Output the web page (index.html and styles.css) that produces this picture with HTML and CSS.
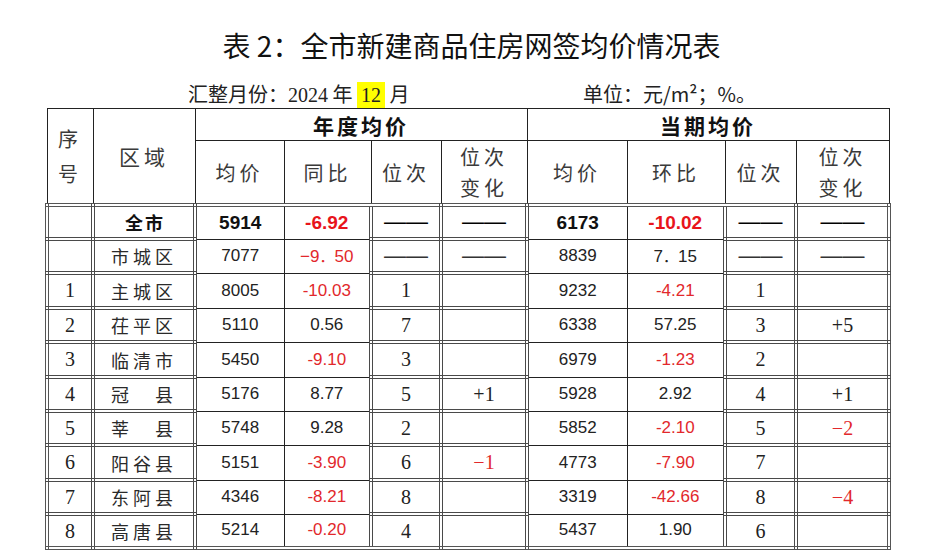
FILE: index.html
```html
<!DOCTYPE html>
<html lang="zh-CN">
<head>
<meta charset="utf-8">
<title>表 2：全市新建商品住房网签均价情况表</title>
<link rel="stylesheet" href="styles.css">
</head>
<body>
<div class="page">
  <h1 class="title">表 2：全市新建商品住房网签均价情况表</h1>
  <div class="meta">
    <span class="month">汇整月份：<span class="d">2024</span> 年 <mark class="hl d">12</mark> 月</span>
    <span class="unit">单位：元/m²；%。</span>
  </div>
  <table class="grid">
    <colgroup>
      <col class="c1"><col class="c2"><col class="c3"><col class="c4"><col class="c5">
      <col class="c6"><col class="c7"><col class="c8"><col class="c9"><col class="c10">
    </colgroup>
    <thead>
      <tr class="hrow1">
        <th rowspan="2" class="hd seq">序<br>号</th>
        <th rowspan="2" class="hd area">区域</th>
        <th colspan="4" class="grp">年度均价</th>
        <th colspan="4" class="grp">当期均价</th>
      </tr>
      <tr class="hrow2">
        <th class="hd">均价</th>
        <th class="hd">同比</th>
        <th class="hd">位次</th>
        <th class="hd two">位次<br>变化</th>
        <th class="hd">均价</th>
        <th class="hd">环比</th>
        <th class="hd">位次</th>
        <th class="hd two">位次<br>变化</th>
      </tr>
    </thead>
    <tbody>
      <tr class="first r34">
        <td class="box"></td>
        <td class="box name total">全市</td>
        <td class="num big">5914</td>
        <td class="num big red">-6.92</td>
        <td class="box dash strong">——</td>
        <td class="box dash strong">——</td>
        <td class="num big">6173</td>
        <td class="num big red">-10.02</td>
        <td class="box dash strong">——</td>
        <td class="box dash strong">——</td>
      </tr>
      <tr class="r34">
        <td class="box"></td>
        <td class="box name">市城区</td>
        <td class="num">7077</td>
        <td class="num red">−9<span class="fw">．</span>50</td>
        <td class="box dash">——</td>
        <td class="box dash">——</td>
        <td class="num">8839</td>
        <td class="num">7<span class="fw">．</span>15</td>
        <td class="box dash">——</td>
        <td class="box dash">——</td>
      </tr>
      <tr class="r35">
        <td class="box rank">1</td>
        <td class="box name">主城区</td>
        <td class="num">8005</td>
        <td class="num red">-10.03</td>
        <td class="box rank">1</td>
        <td class="box rank"></td>
        <td class="num">9232</td>
        <td class="num red">-4.21</td>
        <td class="box rank">1</td>
        <td class="box rank"></td>
      </tr>
      <tr class="r34">
        <td class="box rank">2</td>
        <td class="box name">茌平区</td>
        <td class="num">5110</td>
        <td class="num">0.56</td>
        <td class="box rank">7</td>
        <td class="box rank"></td>
        <td class="num">6338</td>
        <td class="num">57.25</td>
        <td class="box rank">3</td>
        <td class="box rank">+5</td>
      </tr>
      <tr class="r35">
        <td class="box rank">3</td>
        <td class="box name">临清市</td>
        <td class="num">5450</td>
        <td class="num red">-9.10</td>
        <td class="box rank">3</td>
        <td class="box rank"></td>
        <td class="num">6979</td>
        <td class="num red">-1.23</td>
        <td class="box rank">2</td>
        <td class="box rank"></td>
      </tr>
      <tr class="r34">
        <td class="box rank">4</td>
        <td class="box name">冠　县</td>
        <td class="num">5176</td>
        <td class="num">8.77</td>
        <td class="box rank">5</td>
        <td class="box rank">+1</td>
        <td class="num">5928</td>
        <td class="num">2.92</td>
        <td class="box rank">4</td>
        <td class="box rank">+1</td>
      </tr>
      <tr class="r34">
        <td class="box rank">5</td>
        <td class="box name">莘　县</td>
        <td class="num">5748</td>
        <td class="num">9.28</td>
        <td class="box rank">2</td>
        <td class="box rank"></td>
        <td class="num">5852</td>
        <td class="num red">-2.10</td>
        <td class="box rank">5</td>
        <td class="box rank red">−2</td>
      </tr>
      <tr class="r35">
        <td class="box rank">6</td>
        <td class="box name">阳谷县</td>
        <td class="num">5151</td>
        <td class="num red">-3.90</td>
        <td class="box rank">6</td>
        <td class="box rank red">−1</td>
        <td class="num">4773</td>
        <td class="num red">-7.90</td>
        <td class="box rank">7</td>
        <td class="box rank"></td>
      </tr>
      <tr class="r34">
        <td class="box rank">7</td>
        <td class="box name">东阿县</td>
        <td class="num">4346</td>
        <td class="num red">-8.21</td>
        <td class="box rank">8</td>
        <td class="box rank"></td>
        <td class="num">3319</td>
        <td class="num red">-42.66</td>
        <td class="box rank">8</td>
        <td class="box rank red">−4</td>
      </tr>
      <tr class="last r34">
        <td class="box rank">8</td>
        <td class="box name">高唐县</td>
        <td class="num">5214</td>
        <td class="num red">-0.20</td>
        <td class="box rank">4</td>
        <td class="box rank"></td>
        <td class="num">5437</td>
        <td class="num">1.90</td>
        <td class="box rank">6</td>
        <td class="box rank"></td>
      </tr>
    </tbody>
  </table>
</div>
</body>
</html>
```

FILE: styles.css
```css
html, body {
  margin: 0;
  padding: 0;
  background: #ffffff;
}

.page {
  width: 929px;
  height: 557px;
  overflow: hidden;
  font-family: "Noto Sans CJK SC", "Liberation Sans", sans-serif;
  color: #1a1a1a;
}

.title {
  margin: 0;
  padding: 27px 0 0 14px;
  height: 36px;
  line-height: 36px;
  font-size: 28px;
  font-weight: 400;
  text-align: center;
  color: #111;
}

.meta {
  display: flex;
  margin-top: 18px;
  padding-left: 188px;
  height: 26px;
  line-height: 26px;
  font-size: 20px;
  color: #222;
}

.month {
  width: 395px;
}

.d {
  font-family: "Liberation Serif", serif;
  font-size: 20px;
}

.hl {
  background: #ffff00;
  color: #222;
  padding: 0 4px;
  display: inline-block;
  line-height: 26px;
}

.grid {
  margin: 1px 0 0 45px;
  width: 842px;
  table-layout: fixed;
  border-collapse: collapse;
}

.c1 { width: 46px; }
.c2 { width: 102px; }
.c3 { width: 89px; }
.c4 { width: 87px; }
.c5 { width: 70px; }
.c6 { width: 86px; }
.c7 { width: 100px; }
.c8 { width: 98px; }
.c9 { width: 71px; }
.c10 { width: 93px; }

.grid th,
.grid td {
  padding: 0;
  text-align: center;
  vertical-align: middle;
  border: 1px solid #222;
}

.hrow1 { height: 32px; }
.hrow2 { height: 62px; }
.r34 { height: 34px; }
.r35 { height: 35px; }

.hd {
  font-size: 20px;
  font-weight: 400;
  color: #3a3a3a;
  letter-spacing: 4px;
  padding-left: 4px;
}

.seq {
  line-height: 35px;
}

.area {
  font-size: 21px;
}

.two {
  line-height: 31px;
}

.grp {
  font-size: 21px;
  font-weight: 700;
  letter-spacing: 3px;
  padding-left: 3px;
  color: #111;
}

.grid td.box {
  border: 4px double #4a4a4a;
}

.grid td.num {
  border: 1px solid #222;
  font-family: "Liberation Sans", Arial, sans-serif;
  font-size: 17px;
  color: #222;
}

.grid tr.first td {
  border-top: 4px double #555;
}

.grid tr.last td {
  border-bottom: 4px double #555;
}

.grid tr td:first-child {
  border-left: 4px double #555;
}

.grid tr td:last-child {
  border-right: 4px double #555;
}

.name {
  font-size: 18px;
  letter-spacing: 4px;
  padding-left: 4px;
  color: #2a2a2a;
}

.name.total {
  font-weight: 700;
  letter-spacing: 2px;
  padding-left: 2px;
  color: #111;
}

.grid td.num.big {
  font-size: 19px;
  font-weight: 700;
  color: #111;
}

.rank {
  font-family: "Liberation Serif", serif;
  font-size: 20px;
  color: #222;
}

.dash {
  font-family: "Liberation Sans", sans-serif;
  font-size: 22px;
  color: #333;
  letter-spacing: 0;
}

.dash.strong {
  color: #000;
}

.fw {
  font-family: "Noto Sans CJK SC", sans-serif;
  font-size: 15px;
}

.grid td.red {
  color: #e2282c;
}

.grid td.num.big.red {
  color: #e8141b;
}
```
